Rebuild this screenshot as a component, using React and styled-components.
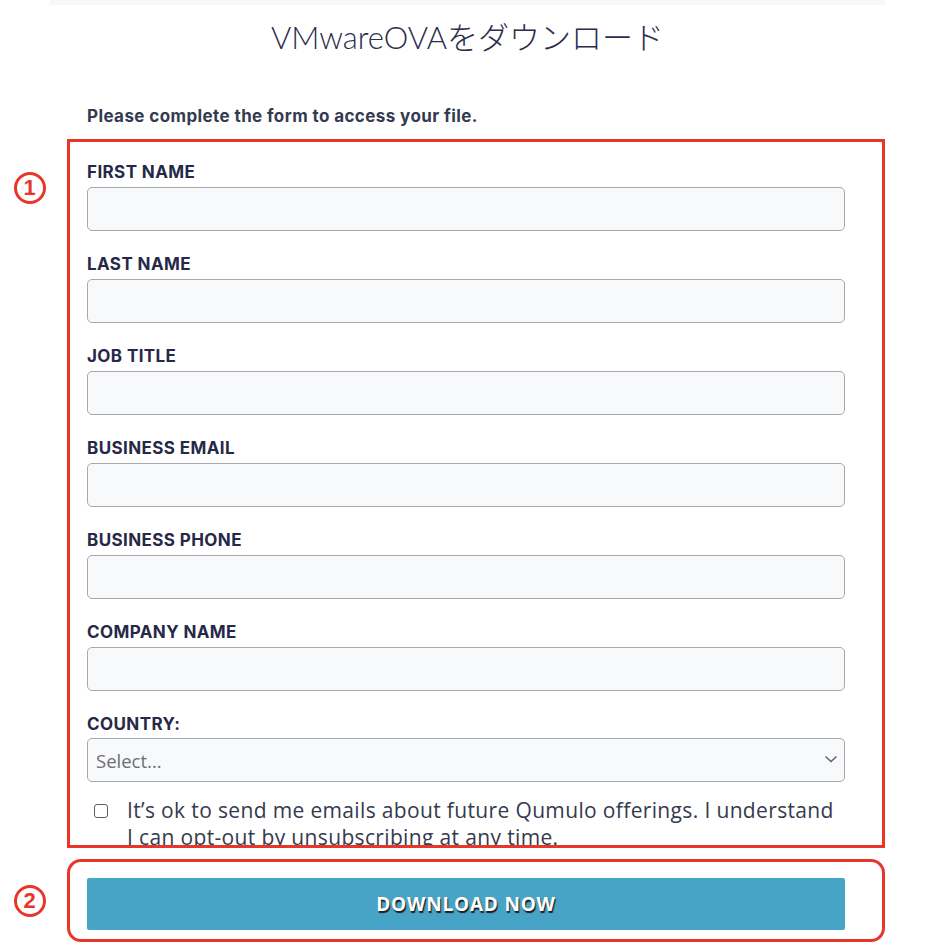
import React from 'react';
import styled, { createGlobalStyle } from 'styled-components';

const Global = createGlobalStyle`
  body {
    margin: 0;
    background: #fff;
    font-family: Inter, "Noto Sans", sans-serif;
  }
`

const Page = styled.div`
  width: 936px;
  display: flex;
  flex-direction: column;
`

const TopBar = styled.div`
  margin-left: 50px;
  width: 835px;
  height: 5px;
  background: #f8f8f8;
`

const Title = styled.h1`
  margin: 11px 0 0 50px;
  width: 835px;
  text-align: center;
  font-family: Lato, "Noto Sans CJK JP", sans-serif;
  font-weight: 300;
  font-size: 31px;
  line-height: 42px;
  color: #2b2d4b;
`

const Intro = styled.p`
  margin: 48px 0 13px 87px;
  font-size: 17px;
  letter-spacing: 0.4px;
  line-height: 20px;
  font-weight: 700;
  color: #343a4f;
`

const Section = styled.div`
  display: grid;
  grid-template-columns: 67px 818px;
  align-items: ${p => p.$align || 'start'};
  margin-top: ${p => p.$gap || 0}px;
`

const Marker = styled.div`
  justify-self: center;
  margin-left: -8px;
  margin-top: ${p => p.$top || 0}px;
  width: 26px;
  height: 26px;
  border: 3px solid #e8362b;
  border-radius: 50%;
  display: flex;
  align-items: center;
  justify-content: center;
  color: #e8362b;
  font-family: "Liberation Sans", Arial, sans-serif;
  font-weight: 700;
  font-size: 22px;
  line-height: 1;
`

const FormBox = styled.div`
  box-sizing: border-box;
  height: 709px;
  overflow: hidden;
  border: 3px solid #e8362b;
  padding: 20px 37px 0 17px;
`

const ButtonBox = styled.div`
  box-sizing: border-box;
  height: 83px;
  border: 3px solid #e8362b;
  border-radius: 14px;
  padding: 16px 37px 0 17px;
`

const Field = styled.div`
  display: flex;
  flex-direction: column;
  gap: 5px;
  margin-bottom: 23px;
`

const Label = styled.label`
  font-size: 17px;
  letter-spacing: 0.4px;
  line-height: 20px;
  font-weight: 700;
  color: #262848;
`

const Input = styled.input`
  box-sizing: border-box;
  height: 44px;
  width: 100%;
  background: #f8f9fb;
  border: 1px solid #a8a8ab;
  border-radius: 5px;
  padding: 0 9px;
  font-size: 18px;
`

const SelectWrap = styled.div`
  position: relative;
  margin-top: -1px;
`

const Select = styled.select`
  box-sizing: border-box;
  appearance: none;
  height: 44px;
  width: 100%;
  background: #f8f9fb;
  border: 1px solid #a8a8ab;
  border-radius: 5px;
  padding: 0 30px 0 8px;
  font-family: "Open Sans", Lato, sans-serif;
  font-size: 18.5px;
  color: #6b6e78;
`

const Chevron = styled.svg`
  position: absolute;
  right: 7px;
  top: 16px;
  pointer-events: none;
`

const Consent = styled.label`
  display: flex;
  gap: 19px;
  margin-top: -8px;
  padding-left: 7px;
  font-family: "Open Sans", Lato, sans-serif;
  font-size: 21px;
  letter-spacing: 0.35px;
  line-height: 27px;
  color: #353a4e;
`

const Check = styled.input`
  appearance: none;
  flex: none;
  width: 14px;
  height: 14px;
  margin: 7px 0 0 0;
  border: 1.5px solid #5a5d66;
  border-radius: 3px;
  background: #fff;
`

const Download = styled.button`
  width: 100%;
  height: 52px;
  border: none;
  border-radius: 2px;
  background: #47a4c7;
  color: #fff;
  font-family: "Open Sans", Lato, sans-serif;
  font-weight: 700;
  font-size: 19px;
  letter-spacing: 0.8px;
  text-shadow: 1px 2px 1px #1c1c1c;
  cursor: pointer;
`

const fields = ['FIRST NAME', 'LAST NAME', 'JOB TITLE', 'BUSINESS EMAIL', 'BUSINESS PHONE', 'COMPANY NAME'];

function App() {
  return (
    <Page>
      <Global />
      <TopBar />
      <Title>VMwareOVAをダウンロード</Title>
      <Intro>Please complete the form to access your file.</Intro>
      <Section>
        <Marker $top={33}>1</Marker>
        <FormBox>
          {fields.map(f => (
            <Field key={f}>
              <Label>{f}</Label>
              <Input type="text" />
            </Field>
          ))}
          <Field>
            <Label>COUNTRY:</Label>
            <SelectWrap>
              <Select defaultValue="">
                <option value="">Select...</option>
              </Select>
              <Chevron width="14" height="10" viewBox="0 0 14 10">
                <path d="M1.5 2.5l5.5 5 5.5-5" fill="none" stroke="#5b5e68" strokeWidth="1.4" />
              </Chevron>
            </SelectWrap>
          </Field>
          <Consent>
            <Check type="checkbox" />
            <span>It’s ok to send me emails about future Qumulo offerings. I understand I can opt-out by unsubscribing at any time.</span>
          </Consent>
        </FormBox>
      </Section>
      <Section $align="center" $gap={11}>
        <Marker>2</Marker>
        <ButtonBox>
          <Download>DOWNLOAD NOW</Download>
        </ButtonBox>
      </Section>
    </Page>
  );
}

export default App;
